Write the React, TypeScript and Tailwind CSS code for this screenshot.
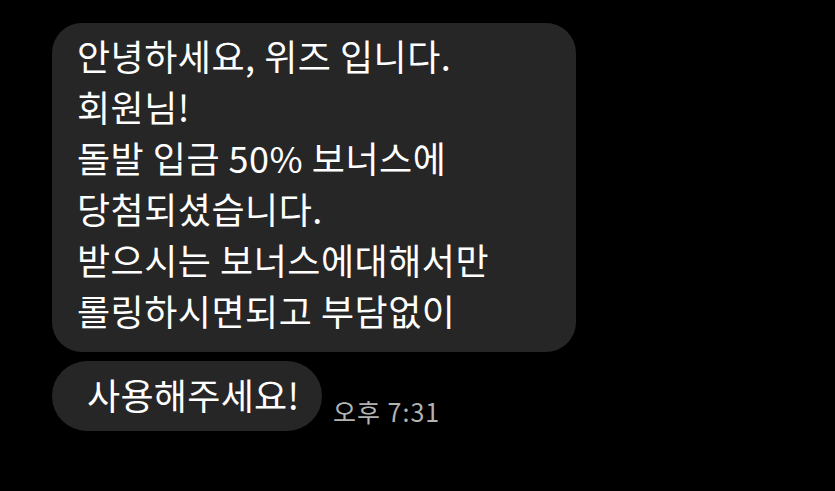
import React from "react";

const lines = [
  "안녕하세요, 위즈 입니다.",
  "회원님!",
  "돌발 입금 50% 보너스에",
  "당첨되셨습니다.",
  "받으시는 보너스에대해서만",
  "롤링하시면되고 부담없이",
];

export default function App() {
  return (
    <div
      className="min-h-[491px] w-[835px] bg-black pl-[52px] pt-[23px]"
      style={{ fontFamily: '"Noto Sans CJK KR", "Noto Sans", sans-serif' }}
    >
      <div className="w-[524px] rounded-[30px] bg-[#262626] pl-[25px] pt-[7px] pb-[16px] text-[36px] leading-[51px] tracking-[0.5px] text-white">
        {lines.map((l) => (
          <div key={l} className="whitespace-nowrap">
            {l}
          </div>
        ))}
      </div>
      <div className="mt-[9px] flex items-end">
        <div className="flex h-[70px] w-[270px] items-center rounded-[35px] bg-[#262626] pb-[5px] pl-[35px] text-[36px] tracking-[0.3px] text-white whitespace-nowrap">
          사용해주세요!
        </div>
        <div className="mb-[4px] ml-[11px] text-[25px] leading-[32px] tracking-[1px] text-[#b3b3b3] whitespace-nowrap">
          오후 7:31
        </div>
      </div>
    </div>
  );
}
